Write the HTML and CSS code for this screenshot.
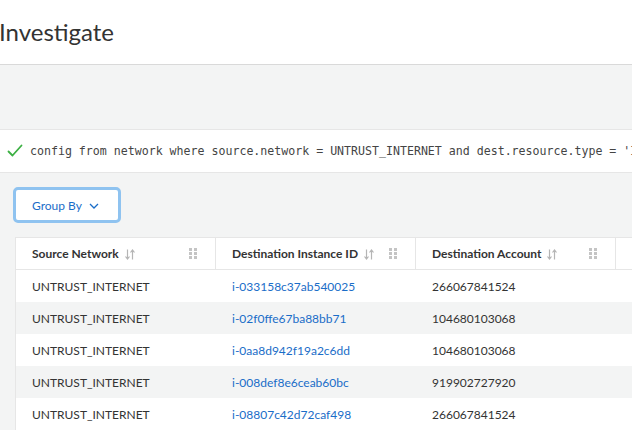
FILE: index.html
```html
<!DOCTYPE html>
<html>
<head>
<meta charset="utf-8">
<link rel="stylesheet" href="styles.css">
</head>
<body>
<div class="page">
  <header class="header">
    <h1 class="title">Investigate</h1>
  </header>
  <main class="main">
    <div class="spacer"></div>
    <div class="query">
      <svg class="check" width="16" height="14" viewBox="0 0 16 14">
        <path d="M1.5 7.5 L5.5 11.5 L14.5 1.5" fill="none" stroke="#3cb043" stroke-width="1.8" stroke-linecap="round" stroke-linejoin="round"/>
      </svg>
      <span class="query-text">config from network where source.network = UNTRUST_INTERNET and dest.resource.type = 'Instance'</span>
    </div>
    <div class="toolbar">
      <button class="group-btn">Group By
        <svg class="chev" width="10" height="6" viewBox="0 0 10 6"><path d="M1 1 L5 5 L9 1" fill="none" stroke="#1a6dc8" stroke-width="1.3"/></svg>
      </button>
    </div>
    <div class="table">
      <div class="row head">
        <div class="cell hcell"><span>Source Network</span>
          <svg class="sort" width="10" height="11" viewBox="0 0 10 11"><path d="M2.5 0.5 V9.5 M0.5 7.5 L2.5 10 L4.5 7.5 M7.5 10.5 V1.5 M5.5 3.5 L7.5 1 L9.5 3.5" fill="none" stroke="#b5b5b5" stroke-width="1.2"/></svg>
          <svg class="grip" width="8" height="11" viewBox="0 0 8 11"><g fill="#c4c4c4"><rect x="0" y="0" width="3" height="3"/><rect x="5" y="0" width="3" height="3"/><rect x="0" y="4" width="3" height="3"/><rect x="5" y="4" width="3" height="3"/><rect x="0" y="8" width="3" height="3"/><rect x="5" y="8" width="3" height="3"/></g></svg>
        </div>
        <div class="cell hcell"><span>Destination Instance ID</span>
          <svg class="sort" width="10" height="11" viewBox="0 0 10 11"><path d="M2.5 0.5 V9.5 M0.5 7.5 L2.5 10 L4.5 7.5 M7.5 10.5 V1.5 M5.5 3.5 L7.5 1 L9.5 3.5" fill="none" stroke="#b5b5b5" stroke-width="1.2"/></svg>
          <svg class="grip" width="8" height="11" viewBox="0 0 8 11"><g fill="#c4c4c4"><rect x="0" y="0" width="3" height="3"/><rect x="5" y="0" width="3" height="3"/><rect x="0" y="4" width="3" height="3"/><rect x="5" y="4" width="3" height="3"/><rect x="0" y="8" width="3" height="3"/><rect x="5" y="8" width="3" height="3"/></g></svg>
        </div>
        <div class="cell hcell"><span>Destination Account</span>
          <svg class="sort" width="10" height="11" viewBox="0 0 10 11"><path d="M2.5 0.5 V9.5 M0.5 7.5 L2.5 10 L4.5 7.5 M7.5 10.5 V1.5 M5.5 3.5 L7.5 1 L9.5 3.5" fill="none" stroke="#b5b5b5" stroke-width="1.2"/></svg>
          <svg class="grip" width="8" height="11" viewBox="0 0 8 11"><g fill="#c4c4c4"><rect x="0" y="0" width="3" height="3"/><rect x="5" y="0" width="3" height="3"/><rect x="0" y="4" width="3" height="3"/><rect x="5" y="4" width="3" height="3"/><rect x="0" y="8" width="3" height="3"/><rect x="5" y="8" width="3" height="3"/></g></svg>
        </div>
        <div class="cell hcell last"></div>
      </div>
      <div class="row"><div class="cell">UNTRUST_INTERNET</div><div class="cell link">i-033158c37ab540025</div><div class="cell">266067841524</div><div class="cell last"></div></div>
      <div class="row alt"><div class="cell">UNTRUST_INTERNET</div><div class="cell link">i-02f0ffe67ba88bb71</div><div class="cell">104680103068</div><div class="cell last"></div></div>
      <div class="row"><div class="cell">UNTRUST_INTERNET</div><div class="cell link">i-0aa8d942f19a2c6dd</div><div class="cell">104680103068</div><div class="cell last"></div></div>
      <div class="row alt"><div class="cell">UNTRUST_INTERNET</div><div class="cell link">i-008def8e6ceab60bc</div><div class="cell">919902727920</div><div class="cell last"></div></div>
      <div class="row"><div class="cell">UNTRUST_INTERNET</div><div class="cell link">i-08807c42d72caf498</div><div class="cell">266067841524</div><div class="cell last"></div></div>
    </div>
  </main>
</div>
</body>
</html>
```

FILE: styles.css
```css
* { box-sizing: border-box; }
html, body { margin: 0; padding: 0; }
body {
  width: 632px;
  height: 430px;
  overflow: hidden;
  font-family: Lato, "Open Sans", sans-serif;
  background: #f3f4f4;
  color: #333;
}
.header {
  height: 65px;
  background: #fff;
  border-bottom: 1px solid #d9d9d9;
  display: flex;
  align-items: flex-start;
}
.title {
  margin: 17px 0 0 -1px;
  font-size: 24px;
  font-weight: 400;
  line-height: 30px;
  color: #333;
}
.main { background: #f3f4f4; }
.spacer { height: 64px; }
.query {
  height: 44px;
  background: #fff;
  border-top: 1px solid #e6e6e6;
  border-bottom: 1px solid #e6e6e6;
  display: flex;
  align-items: center;
  padding-left: 7px;
  white-space: nowrap;
  overflow: hidden;
}
.check { flex: none; margin-right: 7px; margin-top: -1px; }
.query-text {
  font-family: "DejaVu Sans Mono", "Liberation Mono", monospace;
  font-size: 11.6px;
  color: #444;
}
.toolbar {
  padding: 14px 0 0 13px;
  height: 64px;
}
.group-btn {
  width: 108px;
  height: 36px;
  border: 3px solid #8fc3f0;
  border-radius: 5px;
  background: #fff;
  font-family: Lato, sans-serif;
  font-size: 12px;
  color: #1a6dc8;
  display: flex;
  align-items: center;
  padding: 0 0 0 16px;
  gap: 7px;
}
.chev { margin-top: 1px; }
.table {
  margin-left: 15px;
  background: #fff;
  border-top: 1px solid #e6e6e6;
  border-left: 1px solid #e6e6e6;
}
.row {
  display: flex;
  height: 32px;
  background: #fff;
}
.row.alt { background: #f3f4f4; }
.row.head { height: 32px; border-bottom: 1px solid #e6e6e6; }
.cell {
  flex: none;
  width: 200px;
  display: flex;
  align-items: center;
  padding-left: 16px;
  font-size: 12px;
  color: #333;
}
.cell.last { width: 60px; }
.link { color: #1a6dc8; }
.hcell {
  font-weight: 700;
  color: #333;
  border-right: 1px solid #e6e6e6;
  position: relative;
  height: 31px;
}
.sort {
  margin-left: 6px;
  margin-top: 1px;
}
.grip {
  position: absolute;
  right: 18px;
  top: 10px;
}
```
